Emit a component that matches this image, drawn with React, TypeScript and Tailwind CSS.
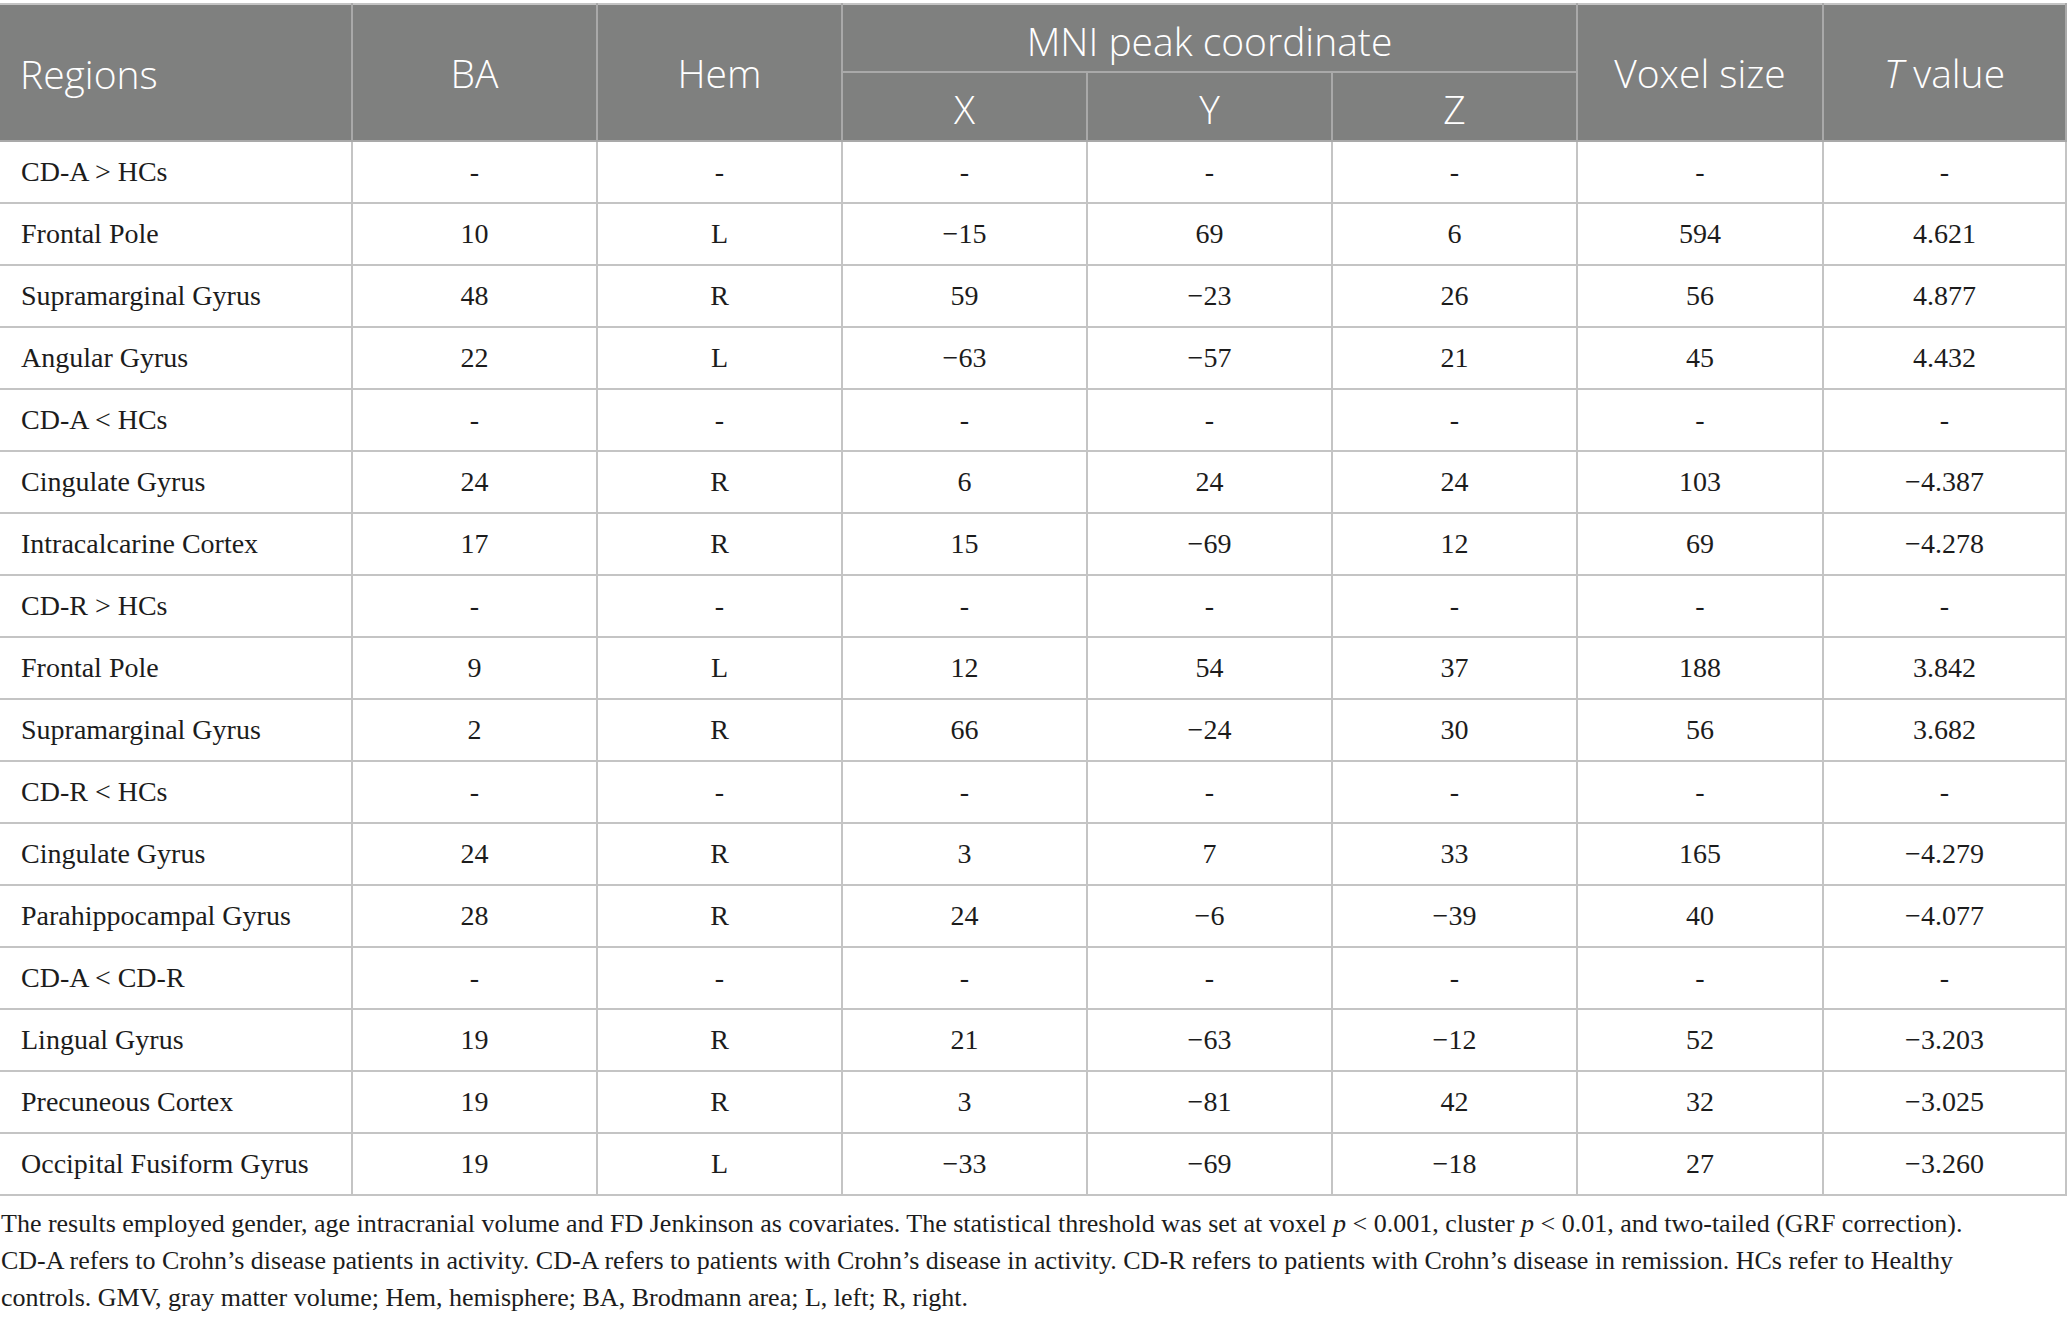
import React from 'react';

type Row = { region: string; cells: string[] };

const dash = ['-', '-', '-', '-', '-', '-', '-'];

const rows: Row[] = [
  { region: 'CD-A > HCs', cells: dash },
  { region: 'Frontal Pole', cells: ['10', 'L', '−15', '69', '6', '594', '4.621'] },
  { region: 'Supramarginal Gyrus', cells: ['48', 'R', '59', '−23', '26', '56', '4.877'] },
  { region: 'Angular Gyrus', cells: ['22', 'L', '−63', '−57', '21', '45', '4.432'] },
  { region: 'CD-A < HCs', cells: dash },
  { region: 'Cingulate Gyrus', cells: ['24', 'R', '6', '24', '24', '103', '−4.387'] },
  { region: 'Intracalcarine Cortex', cells: ['17', 'R', '15', '−69', '12', '69', '−4.278'] },
  { region: 'CD-R > HCs', cells: dash },
  { region: 'Frontal Pole', cells: ['9', 'L', '12', '54', '37', '188', '3.842'] },
  { region: 'Supramarginal Gyrus', cells: ['2', 'R', '66', '−24', '30', '56', '3.682'] },
  { region: 'CD-R < HCs', cells: dash },
  { region: 'Cingulate Gyrus', cells: ['24', 'R', '3', '7', '33', '165', '−4.279'] },
  { region: 'Parahippocampal Gyrus', cells: ['28', 'R', '24', '−6', '−39', '40', '−4.077'] },
  { region: 'CD-A < CD-R', cells: dash },
  { region: 'Lingual Gyrus', cells: ['19', 'R', '21', '−63', '−12', '52', '−3.203'] },
  { region: 'Precuneous Cortex', cells: ['19', 'R', '3', '−81', '42', '32', '−3.025'] },
  { region: 'Occipital Fusiform Gyrus', cells: ['19', 'L', '−33', '−69', '−18', '27', '−3.260'] },
];

const th = 'border-2 border-[#a9a9a9] font-light text-white text-[39px] leading-none';
const td = 'border-2 border-[#c4c4c4] h-[62px] text-[28px] text-[#1c1c1c] text-center';

const App: React.FC = () => {
  return (
    <div className="w-[2067px] bg-white pt-[3px] font-['Liberation_Serif',serif]">
      <table className="table-fixed w-[2066px] border-collapse">
        <colgroup>
          <col className="w-[352px]" />
          <col className="w-[245px]" />
          <col className="w-[245px]" />
          <col className="w-[245px]" />
          <col className="w-[245px]" />
          <col className="w-[245px]" />
          <col className="w-[246px]" />
          <col className="w-[243px]" />
        </colgroup>
        <thead className="bg-[#7f807f] font-['Open_Sans',sans-serif]">
          <tr className="h-[68px]">
            <th rowSpan={2} className={`${th} border-l-0 border-t-[#c4c4c4] text-left pl-[20px] pt-[2px]`}>Regions</th>
            <th rowSpan={2} className={`${th} border-t-[#c4c4c4] text-center`}>BA</th>
            <th rowSpan={2} className={`${th} border-t-[#c4c4c4] text-center`}>Hem</th>
            <th colSpan={3} className={`${th} border-t-[#c4c4c4] text-center pt-[4px]`}>MNI peak coordinate</th>
            <th rowSpan={2} className={`${th} border-t-[#c4c4c4] text-center`}>Voxel size</th>
            <th rowSpan={2} className={`${th} border-t-[#c4c4c4] text-center`}>
              <i>T</i> value
            </th>
          </tr>
          <tr className="h-[69px]">
            <th className={`${th} text-center pt-[4px]`}>X</th>
            <th className={`${th} text-center pt-[4px]`}>Y</th>
            <th className={`${th} text-center pt-[4px]`}>Z</th>
          </tr>
        </thead>
        <tbody>
          {rows.map((row, i) => (
            <tr key={i}>
              <td className={`${td} border-l-0 text-left pl-[21px]`}>{row.region}</td>
              {row.cells.map((c, j) => (
                <td key={j} className={td}>{c}</td>
              ))}
            </tr>
          ))}
        </tbody>
      </table>
      <p className="mt-[9px] text-[26px] leading-[37px] text-[#1c1c1c] pl-[1px]">
        <span className="block whitespace-nowrap">
          The results employed gender, age intracranial volume and FD Jenkinson as covariates. The statistical threshold was set at voxel <i>p</i> &lt; 0.001, cluster <i>p</i> &lt; 0.01, and two-tailed (GRF correction).
        </span>
        <span className="block whitespace-nowrap">
          CD-A refers to Crohn’s disease patients in activity. CD-A refers to patients with Crohn’s disease in activity. CD-R refers to patients with Crohn’s disease in remission. HCs refer to Healthy
        </span>
        <span className="block whitespace-nowrap">
          controls. GMV, gray matter volume; Hem, hemisphere; BA, Brodmann area; L, left; R, right.
        </span>
      </p>
    </div>
  );
};

export default App;
